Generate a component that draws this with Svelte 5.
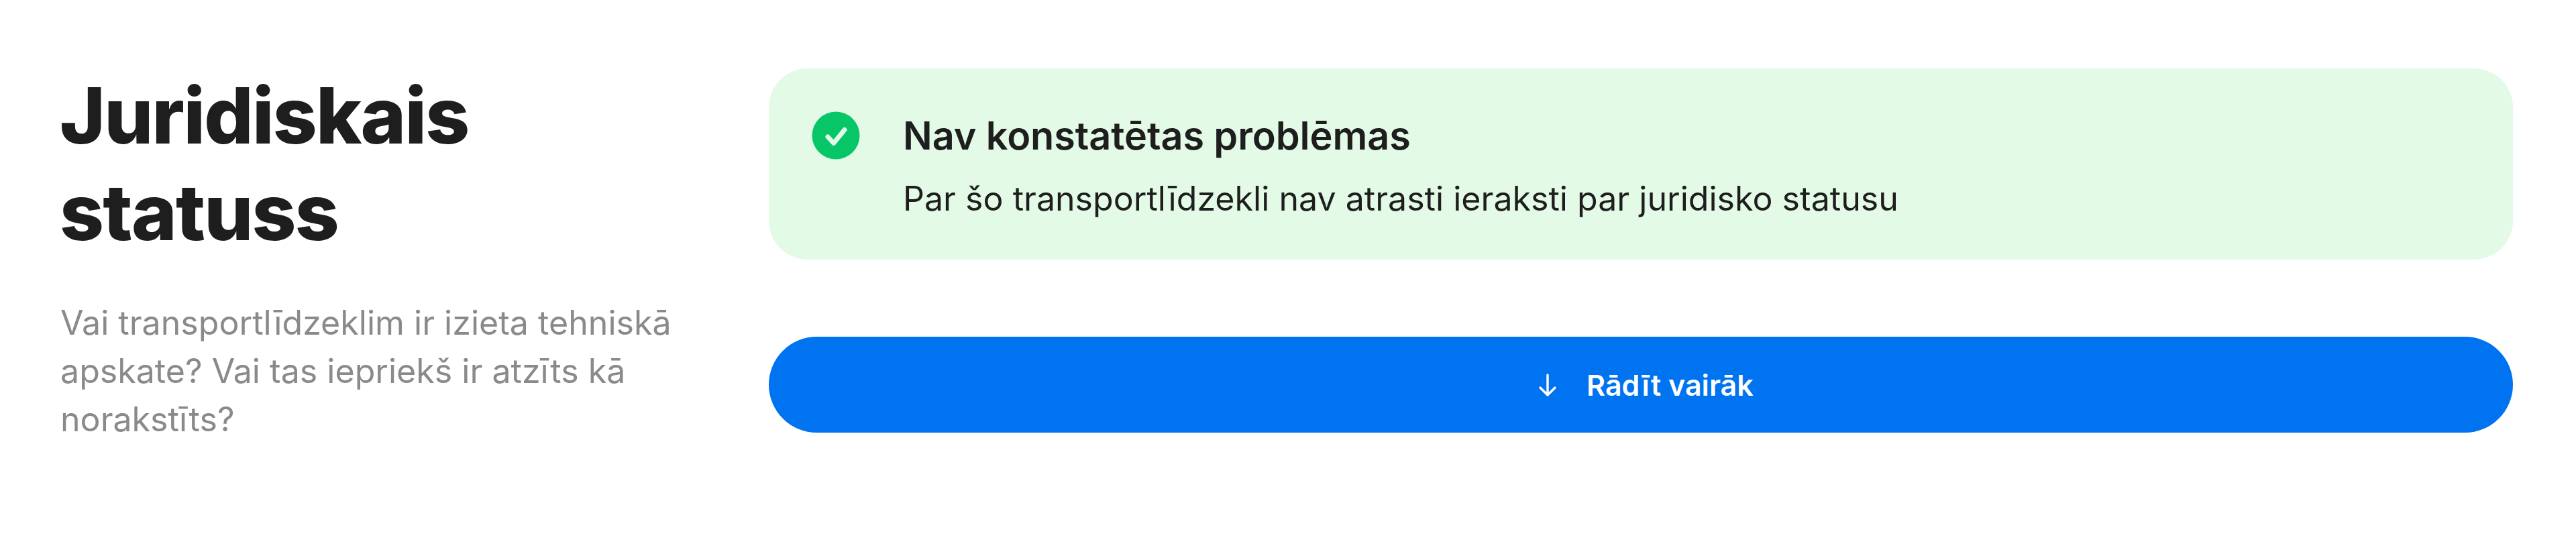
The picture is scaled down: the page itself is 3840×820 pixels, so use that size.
<script lang="ts">
	const title: string = 'Juridiskais statuss'
	const description: string = 'Vai transportlīdzeklim ir izieta tehniskā apskate? Vai tas iepriekš ir atzīts kā norakstīts?'
</script>

<section class="section">
	<div class="intro">
		<h2>{title}</h2>
		<p>{description}</p>
	</div>
	<div class="content">
		<div class="notice">
			<svg class="check" viewBox="0 0 72 72" aria-hidden="true">
				<circle cx="36" cy="36" r="35.5" fill="#06c668" />
				<path d="M24 38l8.7 9.5L49 27.5" fill="none" stroke="#e3fae7" stroke-width="7" stroke-linecap="round" stroke-linejoin="round" />
			</svg>
			<div class="noticeText">
				<h3>Nav konstatētas problēmas</h3>
				<p>Par šo transportlīdzekli nav atrasti ieraksti par juridisko statusu</p>
			</div>
		</div>
		<button class="more" type="button">
			<svg viewBox="0 0 58 58" aria-hidden="true">
				<path d="M29 14v29M18 33l11 11 11-11" fill="none" stroke="#fff" stroke-width="3.4" stroke-linecap="round" stroke-linejoin="round" />
			</svg>
			<span>Rādīt vairāk</span>
		</button>
	</div>
</section>

<style>
	:global(body) {
		background: #fff;
		font-family: Inter, 'Liberation Sans', sans-serif;
	}

	.section {
		display: grid;
		grid-template-columns: 1056px 2600px;
		padding: 102px 94px 0 90px;
		height: 820px;
		box-sizing: border-box;
		color: #1e1e1e;
	}

	.intro h2 {
		margin: -2px 0 0 -1px;
		width: 960px;
		font-size: 115.2px;
		line-height: 144px;
		font-weight: 800;
		letter-spacing: -1.8px;
	}

	.intro p {
		margin: 57px 0 0;
		font-size: 50.1px;
		line-height: 72px;
		color: #8a8a8a;
		width: 960px;
	}

	.content {
		display: flex;
		flex-direction: column;
		gap: 115px;
	}

	.notice {
		display: flex;
		align-items: flex-start;
		gap: 64px;
		height: 285px;
		box-sizing: border-box;
		padding: 64px 64px 0 64px;
		background: #e3fae7;
		border-radius: 58px;
	}

	.check {
		width: 72px;
		height: 72px;
		flex: none;
	}

	.noticeText h3 {
		margin: 0;
		font-size: 57.6px;
		line-height: 72px;
		font-weight: 600;
		letter-spacing: -0.1px;
	}

	.noticeText p {
		margin: 22px 0 0;
		font-size: 50.1px;
		line-height: 72px;
	}

	.more {
		display: flex;
		align-items: center;
		justify-content: center;
		gap: 28.8px;
		height: 143px;
		border: 0;
		border-radius: 72px;
		background: #0073f0;
		color: #fff;
		font: 600 43px Inter, sans-serif;
	}

	.more svg {
		width: 58px;
		height: 58px;
	}
</style>
